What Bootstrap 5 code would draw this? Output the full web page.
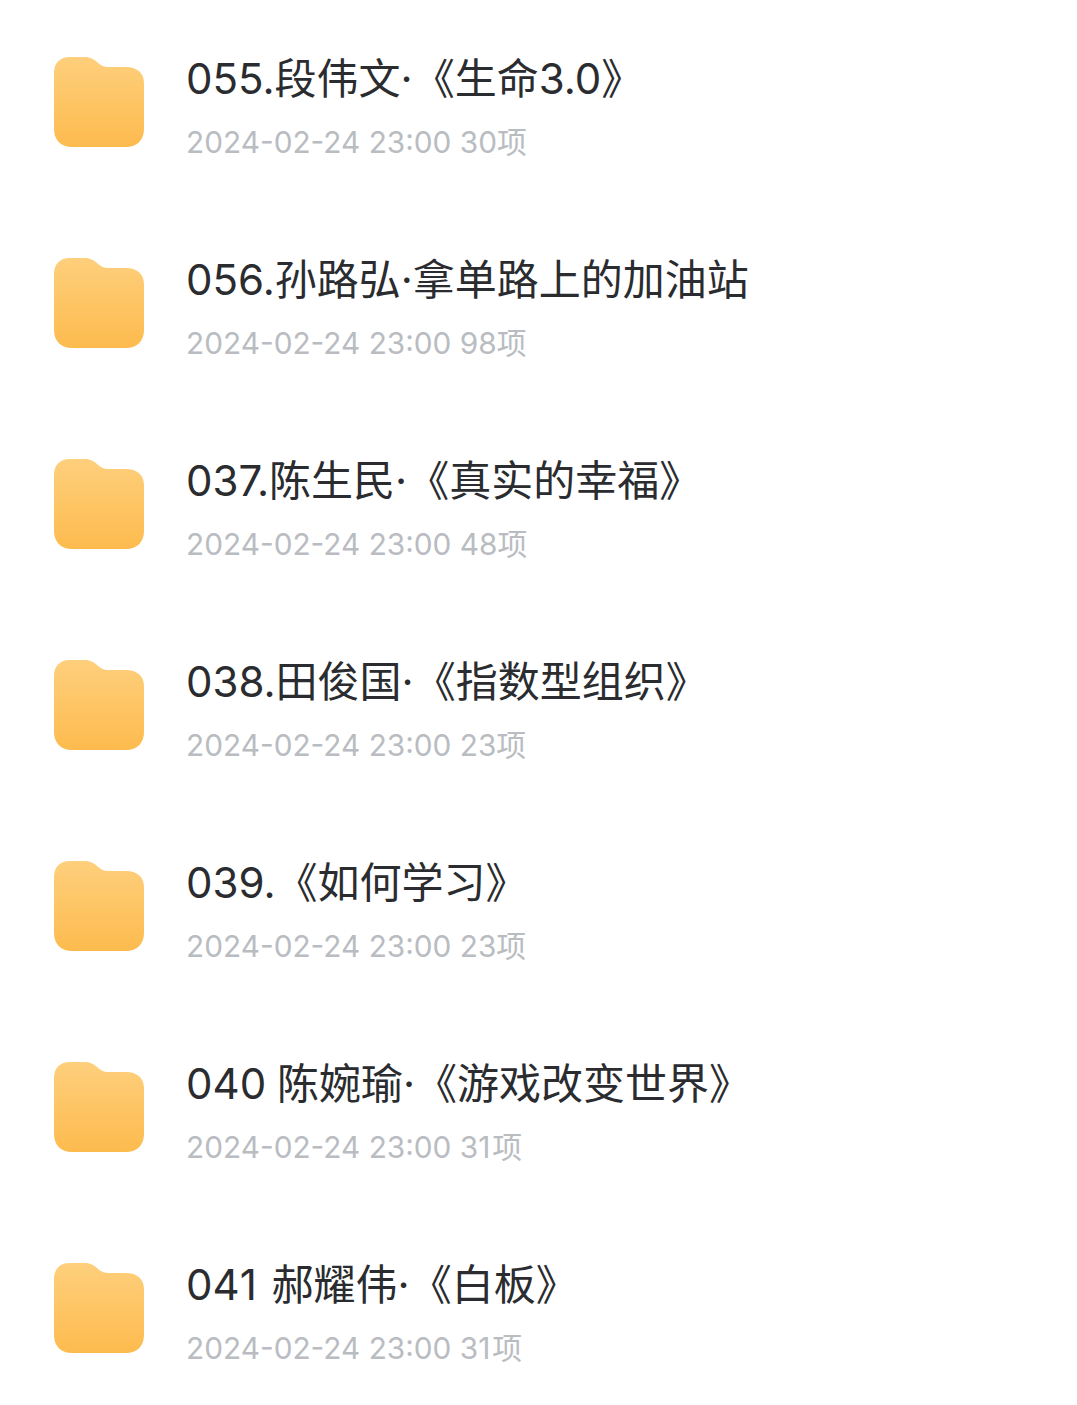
<!DOCTYPE html>
<html lang="zh">
<head>
  <title>Folders</title>
  <meta charset="utf-8">
  <meta name="viewport" content="width=device-width, initial-scale=1">
  <link href="https://cdn.jsdelivr.net/npm/bootstrap@5.3.1/dist/css/bootstrap.min.css" rel="stylesheet">
  <script src="https://cdn.jsdelivr.net/npm/bootstrap@5.3.1/dist/js/bootstrap.bundle.min.js"></script>
  <style>
    body {
      background: #fff;
      font-family: Inter, "Noto Sans CJK SC", sans-serif;
      text-spacing-trim: space-all;
    }
    .file-list {
      padding: 57px 0 0 54px;
    }
    .file-row {
      height: 201px;
      gap: 42px;
    }
    .folder-icon {
      width: 90px;
      height: 90px;
      flex: none;
    }
    .file-name {
      font-size: 42px;
      line-height: 44px;
      color: #2a2c2f;
      white-space: nowrap;
      word-spacing: -1px;
    }
    .file-meta {
      font-size: 29.8px;
      line-height: 36px;
      color: #b9bcc1;
      margin-top: 23px;
      white-space: nowrap;
    }
    /* the 1 is a bit wider in the picture's font */
    .file-name .digit-one {
      letter-spacing: 4px;
    }
    .file-meta .digit-one {
      letter-spacing: 2px;
    }
  </style>
</head>
<body>

<!-- hidden defs for the folder gradient -->
<svg width="0" height="0" class="position-absolute">
  <defs>
    <linearGradient id="folderFill" x1="0" y1="0" x2="0" y2="1">
      <stop offset="0" stop-color="#fecf7c"/>
      <stop offset="1" stop-color="#fdbb4e"/>
    </linearGradient>
    <symbol id="folder" viewBox="0 0 90 90">
      <path fill="url(#folderFill)" d="M0 16C0 6 6 0 16 0H30C36 0 39 1.500 43 5C47 8.500 49 10 55 10H72C83 10 90 16 90 26V72C90 83 83 90 72 90H18C7 90 0 83 0 72Z"/>
    </symbol>
  </defs>
</svg>

<div class="file-list" id="fileList"></div>

<script>
const files = [
  ["055.段伟文·《生命3.0》", "30项"],
  ["056.孙路弘·拿单路上的加油站", "98项"],
  ["037.陈生民·《真实的幸福》", "48项"],
  ["038.田俊国·《指数型组织》", "23项"],
  ["039.《如何学习》", "23项"],
  ["040 陈婉瑜·《游戏改变世界》", "31项"],
  ["041 郝耀伟·《白板》", "31项"]
];

function markOnes(text) {
  return text.replace(/1/g, '<span class="digit-one">1</span>');
}

const list = document.getElementById("fileList");
files.forEach(f => {
  const row = document.createElement("div");
  row.className = "file-row d-flex align-items-start";
  row.innerHTML = `
    <svg class="folder-icon"><use href="#folder"/></svg>
    <div>
      <div class="file-name">${markOnes(f[0])}</div>
      <div class="file-meta">2024-02-24 23:00 ${markOnes(f[1])}</div>
    </div>`;
  list.appendChild(row);
});
</script>

</body>
</html>
